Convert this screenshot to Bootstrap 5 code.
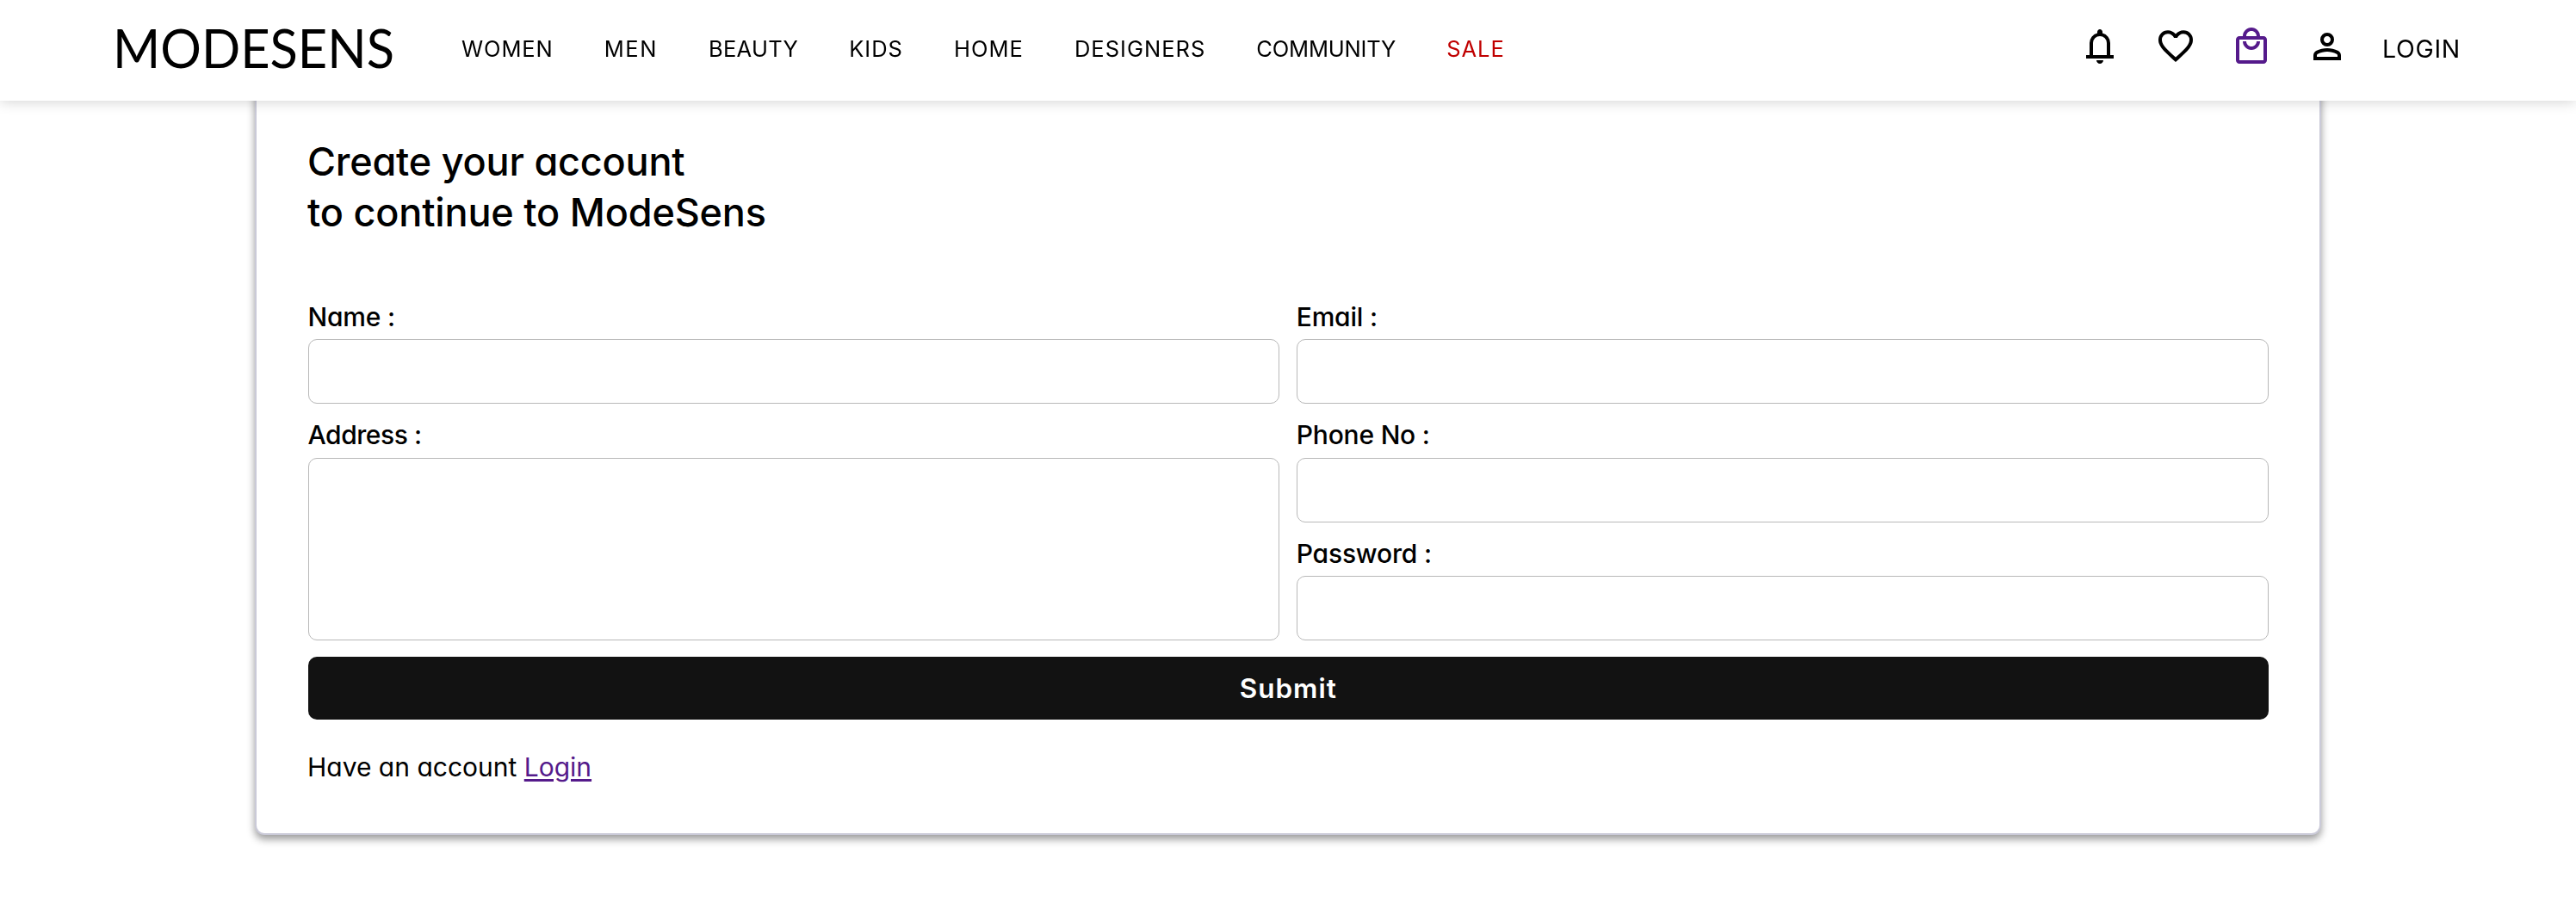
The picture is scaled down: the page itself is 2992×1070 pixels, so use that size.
<!DOCTYPE html>
<html lang="en">
<head>
<meta charset="utf-8">
<meta name="viewport" content="width=device-width, initial-scale=1">
<title>ModeSens</title>
<link href="https://cdn.jsdelivr.net/npm/bootstrap@5.3.0/dist/css/bootstrap.min.css" rel="stylesheet">
<style>
body{font-family:Inter,"Liberation Sans",sans-serif;font-feature-settings:"cv11";color:#000;background:#fff;min-height:1070px;padding-top:40px}
.site-header{height:117px;padding:0 134px 0 121px;box-shadow:0 0 16px rgba(0,0,0,.2);background:#fff}
.brand-logo{width:360px;height:100px;padding:0;margin:0 55px 4px 0;flex:none;overflow:visible}
.brand-logo svg{display:block;overflow:visible}
.brand-logo text{font-family:Lato,sans-serif;font-size:62.5px;fill:#000}
.main-menu{gap:59.1px;margin-bottom:3px}
.main-menu .nav-link{padding:0;font-size:25.5px;line-height:40px;font-weight:400;color:#000;letter-spacing:1px}
.main-menu .ls-women{letter-spacing:.9px}
.main-menu .ls-men{letter-spacing:1.5px}
.main-menu .ls-tight{letter-spacing:.3px}
.main-menu .ls-community{letter-spacing:-.2px}
.main-menu .sale-link{color:#c00000}
.tools{gap:40px;margin-bottom:9px}
.tools svg{width:48px;height:48px;display:block}
.login-link{font-size:28.5px;line-height:40px;font-weight:400;letter-spacing:.7px;margin:6px 0 0;color:#000;text-decoration:none}
.bag-link{color:#551a8b}
.signup-card{width:2400px;height:930px;margin:0 auto;padding:116px 59.500px 0 60px;border:2px solid #cacad8;border-radius:11px;box-shadow:0 5px 10px rgba(0,0,0,.4)}
.signup-title{font-size:45px;line-height:59px;font-weight:500;margin:0 0 71.5px -1px;letter-spacing:-.2px}
.signup-title span{display:block;letter-spacing:-.18px}
.form-grid{--bs-gutter-x:20px}
.field{margin-bottom:16px}
.field:last-child{margin-bottom:19px}
.field .form-label{display:block;font-size:30px;line-height:40px;font-weight:500;letter-spacing:-.2px;margin:0 0 6.5px -.5px}
.field .label-tight{letter-spacing:-.45px}
.field .form-control{height:75px;border:1px solid #b8b8b8;border-radius:10px;resize:none}
.field textarea.form-control{height:212.5px}
.submit-btn{height:73px;background:#121212;color:#fff;border:0;border-radius:10px;font-size:31.5px;font-weight:600;letter-spacing:1px;padding:0}
.account-note{font-size:30px;line-height:40px;font-weight:400;letter-spacing:0;margin:35px 0 0 -1px}
.account-note a{color:#551a8b;letter-spacing:0;text-decoration-thickness:3px;text-underline-offset:3px}
</style>
<script src="https://cdn.jsdelivr.net/npm/bootstrap@5.3.0/dist/js/bootstrap.bundle.min.js" defer></script>
</head>
<body>
<header class="site-header fixed-top d-flex align-items-center">
  <a class="navbar-brand brand-logo" href="#" aria-label="Modesens">
    <svg width="360" height="100" viewBox="0 0 360 100"><text x="10" y="72" textLength="327" lengthAdjust="spacingAndGlyphs">MODESENS</text></svg>
  </a>
  <nav class="nav main-menu flex-nowrap">
    <a class="nav-link ls-women" href="#">WOMEN</a>
    <a class="nav-link ls-men" href="#">MEN</a>
    <a class="nav-link ls-tight" href="#">BEAUTY</a>
    <a class="nav-link" href="#">KIDS</a>
    <a class="nav-link" href="#">HOME</a>
    <a class="nav-link" href="#">DESIGNERS</a>
    <a class="nav-link ls-community" href="#">COMMUNITY</a>
    <a class="nav-link sale-link" href="#">SALE</a>
  </nav>
  <div class="tools d-flex align-items-center ms-auto">
    <svg viewBox="0 -960 960 960"><path d="M160-200v-80h80v-280q0-83 50-147.500T420-792v-28q0-25 17.500-42.500T480-880t42.500 17.500T540-820v28q80 20 130 84.500T720-560v280h80v80H160Zm320 120q-33 0-56.500-23.500T400-160h160q0 33-23.500 56.500T480-80ZM320-280h320v-280q0-66-47-113t-113-47q-66 0-113 47t-47 113v280Z"/></svg>
    <svg viewBox="0 -960 960 960"><path d="m480-120-58-52q-101-91-167-157T150-447.500Q111-500 95.500-544T80-634q0-94 63-157t157-63q52 0 99 22t81 62q34-40 81-62t99-22q94 0 157 63t63 157q0 46-15.500 90T810-447.500Q771-395 705-329T538-172l-58 52Zm0-108q96-86 158-147.500t98-107q36-45.500 50-81t14-70.500q0-60-40-100t-100-40q-47 0-87 26.500T518-680h-76q-15-41-55-67.500T300-774q-60 0-100 40t-40 100q0 35 14 70.500t50 81q36 45.500 98 107T480-228Z"/></svg>
    <a class="bag-link" href="#" aria-label="Bag"><svg viewBox="0 0 24 24" fill="currentColor"><path d="M19 6h-2c0-2.760-2.240-5-5-5S7 3.240 7 6H5c-1.100 0-1.990.900-1.990 2L3 20c0 1.100.900 2 2 2h14c1.100 0 2-.900 2-2V8c0-1.100-.900-2-2-2zm-7-3c1.660 0 3 1.340 3 3H9c0-1.660 1.340-3 3-3zm7 17H5V8h14v12zm-7-8c-1.660 0-3-1.340-3-3H7c0 2.760 2.240 5 5 5s5-2.240 5-5h-2c0 1.660-1.340 3-3 3z"/></svg></a>
    <svg viewBox="0 -960 960 960"><path d="M480-480q-66 0-113-47t-47-113q0-66 47-113t113-47q66 0 113 47t47 113q0 66-47 113t-113 47ZM160-160v-112q0-34 17.500-62.500T224-378q62-31 126-46.500T480-440q66 0 130 15.500T736-378q29 15 46.500 43.500T800-272v112H160Zm80-80h480v-32q0-11-5.500-20T700-306q-54-27-109-40.500T480-360q-56 0-111 13.500T260-306q-9 5-14.500 14t-5.500 20v32Zm240-320q33 0 56.500-23.500T560-640q0-33-23.500-56.500T480-720q-33 0-56.500 23.500T400-640q0 33 23.500 56.500T480-560Z"/></svg>
    <a class="login-link" href="#">LOGIN</a>
  </div>
</header>

<main class="card signup-card">
  <h1 class="signup-title">Create your account<span>to continue to ModeSens</span></h1>
  <form>
    <div class="row form-grid">
      <div class="col-6">
        <div class="field"><label class="form-label" for="name">Name :</label><input class="form-control" id="name" type="text"></div>
        <div class="field"><label class="form-label label-tight" for="address">Address :</label><textarea class="form-control" id="address"></textarea></div>
      </div>
      <div class="col-6">
        <div class="field"><label class="form-label" for="email">Email :</label><input class="form-control" id="email" type="email"></div>
        <div class="field"><label class="form-label" for="phone">Phone No :</label><input class="form-control" id="phone" type="tel"></div>
        <div class="field"><label class="form-label" for="password">Password :</label><input class="form-control" id="password" type="password"></div>
      </div>
    </div>
    <button class="btn submit-btn w-100 d-block" type="button">Submit</button>
  </form>
  <p class="account-note">Have an account <a href="#">Login</a></p>
</main>
</body>
</html>
